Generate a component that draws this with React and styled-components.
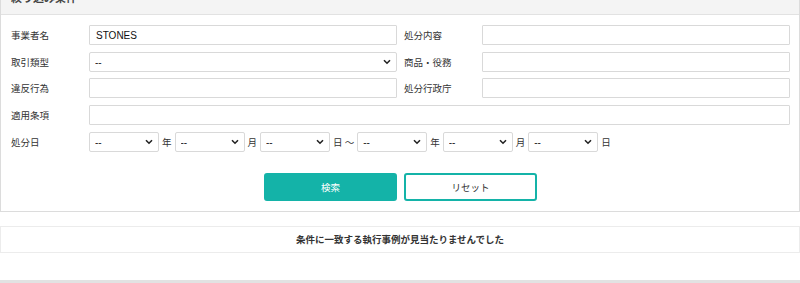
import styled, { createGlobalStyle } from 'styled-components';

const GlobalStyle = createGlobalStyle`
  html, body {
    margin: 0;
    padding: 0;
    background: #fff;
    overflow: hidden;
  }
  body {
    font-family: "Liberation Sans", "Noto Sans CJK JP", sans-serif;
    color: #333;
  }
`;

const Chevron = () => (
  <svg width="8" height="6" viewBox="0 0 8 6">
    <path d="M1 1.2 L4 4.2 L7 1.2" fill="none" stroke="#222" strokeWidth="1.6" />
  </svg>
);

function Select({ width }) {
  return (
    <SelectWrap $width={width}>
      <SelectBox defaultValue="">
        <option value="">--</option>
      </SelectBox>
      <Arrow>
        <Chevron />
      </Arrow>
    </SelectWrap>
  );
}

function App() {
  return (
    <Page>
      <GlobalStyle />
      <Panel>
        <PanelHead>絞り込み条件</PanelHead>
        <PanelBody>
          <Grid>
            <Label>事業者名</Label>
            <TextInput defaultValue="STONES" />
            <Label $indent>処分内容</Label>
            <TextInput />

            <Label>取引類型</Label>
            <Select />
            <Label $indent>商品・役務</Label>
            <TextInput />

            <Label>違反行為</Label>
            <TextInput />
            <Label $indent>処分行政庁</Label>
            <TextInput />

            <Label>適用条項</Label>
            <Wide>
              <TextInput />
            </Wide>

            <Label>処分日</Label>
            <DateRow>
              <Select width={70} />
              <Unit>年</Unit>
              <Select width={70} />
              <Unit>月</Unit>
              <Select width={70} />
              <Unit>日 〜</Unit>
              <Select width={70} />
              <Unit>年</Unit>
              <Select width={70} />
              <Unit>月</Unit>
              <Select width={70} />
              <Unit>日</Unit>
            </DateRow>
          </Grid>
          <Buttons>
            <Button $primary>検索</Button>
            <Button>リセット</Button>
          </Buttons>
        </PanelBody>
      </Panel>
      <Message>条件に一致する執行事例が見当たりませんでした</Message>
      <Footer />
    </Page>
  );
}

export default App;

const Page = styled.div`
  width: 800px;
  height: 283px;
  overflow: hidden;
  display: flex;
  flex-direction: column;
`;

const Panel = styled.div`
  margin-top: -16px;
  border: 1px solid #dcdcdc;
  background: #fff;
`;

const PanelHead = styled.div`
  height: 29px;
  line-height: 26px;
  padding-left: 10px;
  background: #f4f4f4;
  border-bottom: 1px solid #e2e2e2;
  font-size: 11px;
  font-weight: bold;
  color: #444;
`;

const PanelBody = styled.div`
  padding: 10px 9px 10px 10px;
`;

const Grid = styled.div`
  display: grid;
  grid-template-columns: 78px 1fr 85px 1fr;
  row-gap: 6.5px;
  align-items: center;
`;

const Label = styled.div`
  padding-left: ${(p) => (p.$indent ? '7px' : '0')};
  font-size: 9.5px;
  color: #333;
  font-family: "Noto Sans CJK JP", sans-serif;
`;

const TextInput = styled.input`
  box-sizing: border-box;
  width: 100%;
  height: 20px;
  margin: 0;
  padding: 0 6px;
  border: 1px solid #d9d9d9;
  border-radius: 1px;
  background: #fff;
  font-family: "Liberation Sans", "Noto Sans CJK JP", sans-serif;
  font-size: 10px;
  color: #111;
  outline: none;
`;

const Wide = styled.div`
  grid-column: 2 / 5;
`;

const SelectWrap = styled.div`
  position: relative;
  width: ${(p) => (p.$width ? `${p.$width}px` : '100%')};
  height: 20px;
  flex: none;
`;

const SelectBox = styled.select`
  appearance: none;
  -webkit-appearance: none;
  box-sizing: border-box;
  width: 100%;
  height: 20px;
  margin: 0;
  padding: 0 16px 0 5px;
  border: 1px solid #d9d9d9;
  border-radius: 2px;
  background: #fff;
  font-family: "Liberation Sans", sans-serif;
  font-size: 10px;
  color: #222;
  outline: none;
`;

const Arrow = styled.span`
  position: absolute;
  right: 6px;
  top: 7px;
  display: flex;
  pointer-events: none;
`;

const DateRow = styled.div`
  grid-column: 2 / 5;
  display: flex;
  align-items: center;
`;

const Unit = styled.span`
  font-family: "Noto Sans CJK JP", sans-serif;
  font-size: 9.5px;
  color: #333;
  margin: 0 3px;
`;

const Buttons = styled.div`
  display: flex;
  justify-content: center;
  gap: 7px;
  margin-top: 21px;
`;

const Button = styled.button`
  box-sizing: border-box;
  width: 133px;
  height: 28px;
  border-radius: 3px;
  border: 2px solid #14b3a8;
  background: ${(p) => (p.$primary ? '#14b3a8' : '#fff')};
  color: ${(p) => (p.$primary ? '#fff' : '#333')};
  font-family: "Noto Sans CJK JP", sans-serif;
  font-size: 9.5px;
  cursor: pointer;
`;

const Message = styled.div`
  margin-top: 14px;
  height: 28px;
  box-sizing: border-box;
  border: 1px solid #ececec;
  display: flex;
  align-items: center;
  justify-content: center;
  font-family: "Noto Sans CJK JP", sans-serif;
  font-size: 9.5px;
  font-weight: bold;
  color: #333;
`;

const Footer = styled.div`
  margin-top: 27px;
  flex: 1;
  border-top: 3px solid #e2e2e2;
  background: #fff;
`;
